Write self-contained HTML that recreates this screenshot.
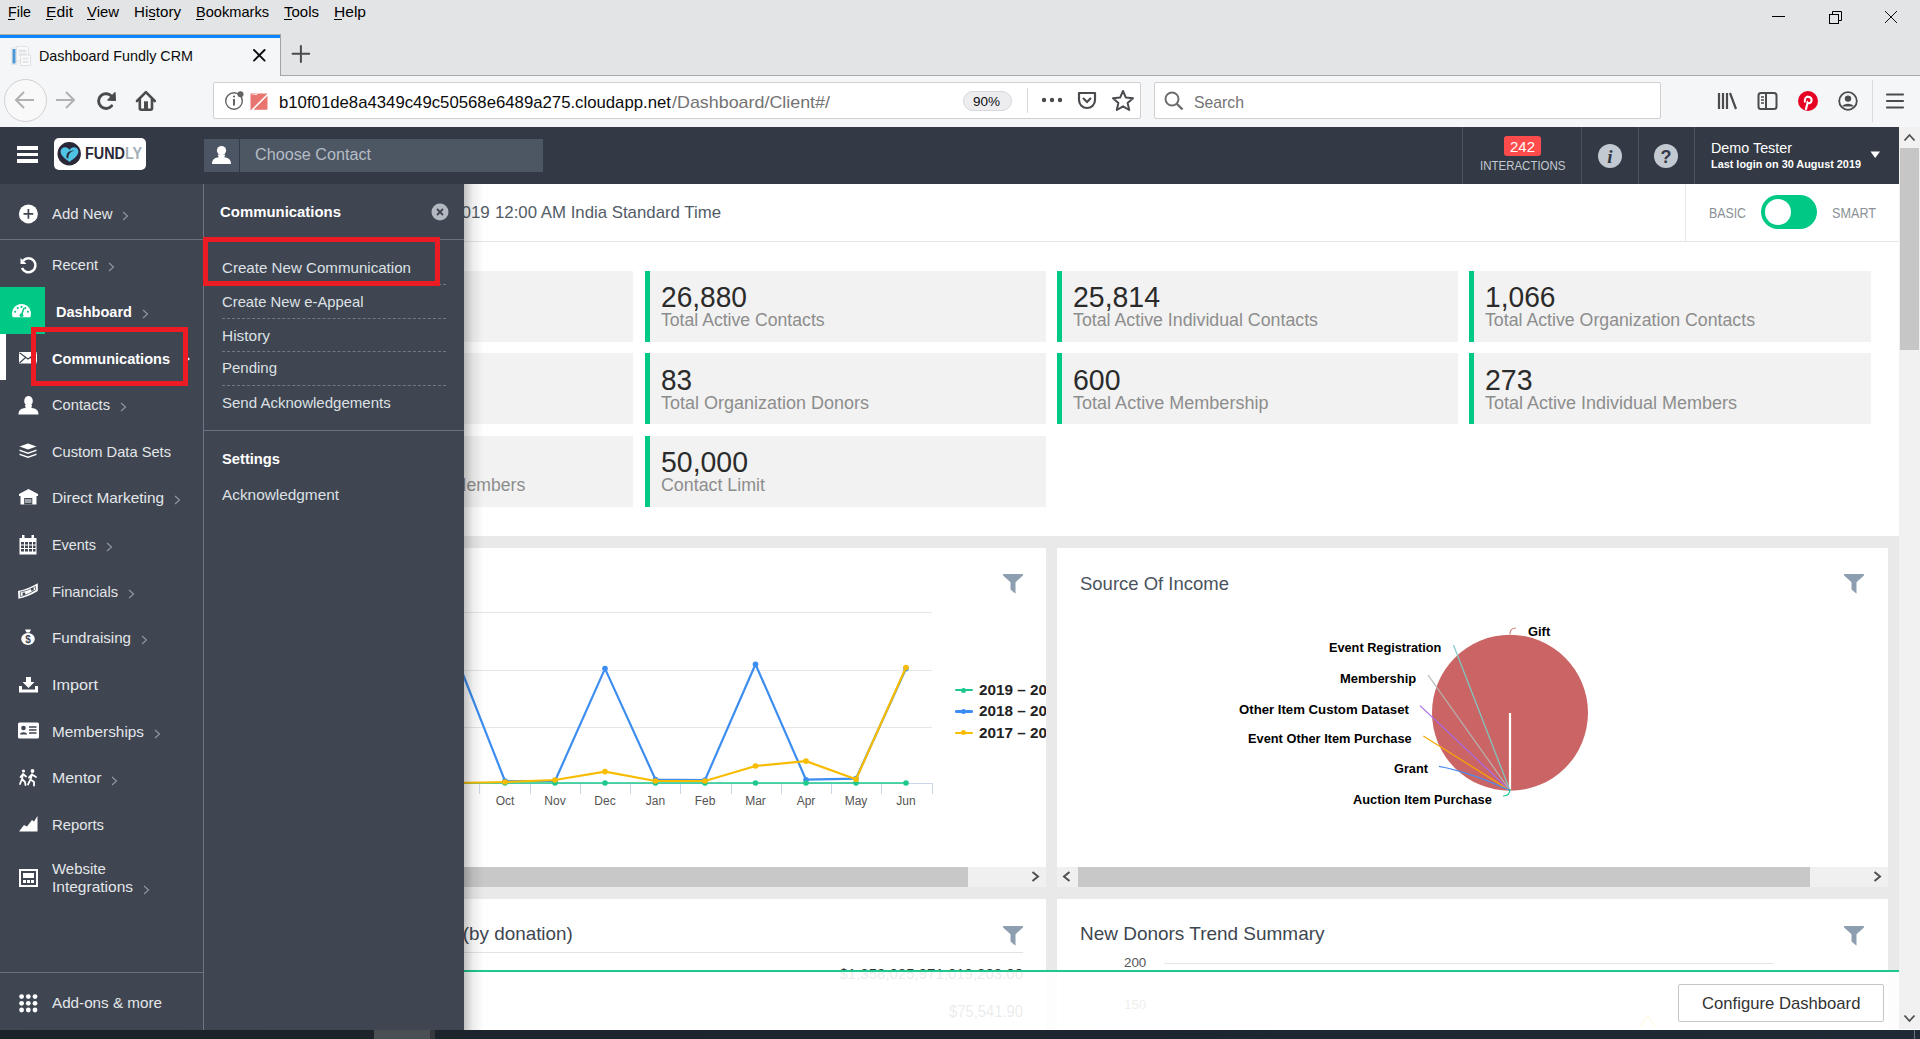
<!DOCTYPE html><html><head><meta charset="utf-8"><style>
html,body{margin:0;padding:0;width:1920px;height:1039px;overflow:hidden;position:relative;background:#fff;font-family:"Liberation Sans",sans-serif}
.t{position:absolute;line-height:1;white-space:nowrap;transform-origin:0 50%}
svg{overflow:visible}
</style></head><body>
<div style="position:absolute;left:0px;top:0px;width:1920px;height:34px;background:#e3e4e6"></div>
<div style="position:absolute;left:0px;top:34px;width:1920px;height:41px;background:#e3e4e6"></div>
<div style="position:absolute;left:280px;top:75px;width:1640px;height:1px;background:#a9a9ac"></div>
<div style="position:absolute;left:0px;top:34px;width:280px;height:42px;background:#f5f6f7"></div>
<div style="position:absolute;left:0px;top:34px;width:281px;height:1px;background:#b5aea8"></div>
<div style="position:absolute;left:0px;top:35px;width:280px;height:3px;background:#0a84ff"></div>
<div style="position:absolute;left:280px;top:34px;width:1px;height:42px;background:#a3a3a6"></div>
<div style="position:absolute;left:0px;top:76px;width:1920px;height:51px;background:#f5f6f7"></div>
<div class="t" style="left:8.0px;top:4.30px;font-size:15.0px;color:#000;transform:scaleX(0.9515);">File</div>
<div class="t" style="left:46.0px;top:4.30px;font-size:15.0px;color:#000;transform:scaleX(1.0446);">Edit</div>
<div class="t" style="left:87.0px;top:4.30px;font-size:15.0px;color:#000;transform:scaleX(0.9925);">View</div>
<div class="t" style="left:134.0px;top:4.30px;font-size:15.0px;color:#000;transform:scaleX(1.0070);">History</div>
<div class="t" style="left:196.0px;top:4.30px;font-size:15.0px;color:#000;transform:scaleX(0.9730);">Bookmarks</div>
<div class="t" style="left:284.0px;top:4.30px;font-size:15.0px;color:#000;transform:scaleX(0.9995);">Tools</div>
<div class="t" style="left:334.0px;top:4.30px;font-size:15.0px;color:#000;transform:scaleX(1.0373);">Help</div>
<div style="position:absolute;left:8px;top:19px;width:7px;height:1px;background:#000"></div>
<div style="position:absolute;left:46px;top:19px;width:7px;height:1px;background:#000"></div>
<div style="position:absolute;left:87px;top:19px;width:8px;height:1px;background:#000"></div>
<div style="position:absolute;left:149px;top:19px;width:6px;height:1px;background:#000"></div>
<div style="position:absolute;left:196px;top:19px;width:8px;height:1px;background:#000"></div>
<div style="position:absolute;left:284px;top:19px;width:8px;height:1px;background:#000"></div>
<div style="position:absolute;left:334px;top:19px;width:8px;height:1px;background:#000"></div>
<div style="position:absolute;left:1772px;top:16px;width:13px;height:1px;background:#000"></div>
<svg style="position:absolute;left:1827px;top:9px" width="18" height="18"><rect x="2.5" y="5.5" width="9" height="9" fill="none" stroke="#000"/><path d="M5.5 5.5V2.5H14.5V11.5H11.5" fill="none" stroke="#000"/></svg>
<svg style="position:absolute;left:1883px;top:9px" width="18" height="18"><path d="M2 2L14 14M14 2L2 14" stroke="#111" stroke-width="1"/></svg>
<svg style="position:absolute;left:0;top:0" width="40" height="70"><rect x="11.5" y="48" width="5" height="16.5" fill="#f3f4f6" stroke="#dadcdf" stroke-width="0.6"/><rect x="12.5" y="49" width="3" height="14.5" fill="#4b97d6"/><path d="M16.5 46.5H26.5L28.5 48.5V61H16.5Z" fill="#fafafa" stroke="#d8d8da" stroke-width="0.7"/><rect x="18.5" y="49.5" width="8" height="3" fill="#e1e4ea"/><rect x="18.5" y="53.5" width="8" height="2" fill="#e1e4ea"/><path d="M20.5 55H30.5V65.5H20.5Z" fill="#fbfbfb" stroke="#d4d4d6" stroke-width="0.7"/><rect x="22.5" y="57.5" width="6" height="2" fill="#e3e6ea"/><rect x="22.5" y="61" width="6" height="2" fill="#e3e6ea"/></svg>
<div class="t" style="left:39.0px;top:48.30px;font-size:15.0px;color:#0c0c0d;transform:scaleX(0.9571);">Dashboard Fundly CRM</div>
<svg style="position:absolute;left:0;top:0" width="330" height="80"><path d="M254 50L264.6 60.6M264.6 50L254 60.6" stroke="#0c0c0d" stroke-width="1.9" stroke-linecap="round"/><path d="M300.9 46V62M292.6 53.8H309.2" stroke="#4a4a4f" stroke-width="2" stroke-linecap="round"/></svg>
<div style="position:absolute;left:4px;top:79px;width:41px;height:41px;border:1px solid #cfd0d2;border-radius:50%;background:#f9f9fa"></div>
<svg style="position:absolute;left:14px;top:90px" width="22" height="20"><path d="M2 10H20M10 2L2 10L10 18" fill="none" stroke="#b1b1b3" stroke-width="2"/></svg>
<svg style="position:absolute;left:55px;top:90px" width="22" height="20"><path d="M1 10H19M11 2L19 10L11 18" fill="none" stroke="#b1b1b3" stroke-width="2"/></svg>
<svg style="position:absolute;left:0;top:0" width="200" height="130"><path d="M112.06 96.86A7.4 7.4 0 1 0 111.67 105.86" fill="none" stroke="#4a4a4f" stroke-width="2.9" stroke-linecap="round"/><path d="M115 92.6L115.4 100.3L107.8 100.1Z" fill="#4a4a4f" stroke="#4a4a4f" stroke-width="1.2" stroke-linejoin="round"/><path d="M137 101L145.9 92.2L154.8 101" fill="none" stroke="#4a4a4f" stroke-width="2.6" stroke-linecap="round" stroke-linejoin="round"/><path d="M139.8 99V108.3Q139.8 109.7 141.2 109.7H150.6Q152 109.7 152 108.3V99" fill="none" stroke="#4a4a4f" stroke-width="2.6"/><rect x="144" y="101.3" width="4" height="8.5" fill="#4a4a4f"/></svg>
<div style="position:absolute;left:213px;top:82px;width:926px;height:35px;background:#fff;border:1px solid #cfcfd1;border-radius:2px"></div>
<svg style="position:absolute;left:224px;top:91px" width="22" height="20"><circle cx="10" cy="10" r="8.3" fill="none" stroke="#636366" stroke-width="1.4"/><rect x="9" y="8" width="2" height="6.5" fill="#636366"/><circle cx="10" cy="5.5" r="1.1" fill="#636366"/><circle cx="16.5" cy="3.3" r="3" fill="#636366"/></svg>
<svg style="position:absolute;left:249px;top:91px" width="20" height="20"><path d="M1.5 4H8V2.5H1.5ZM10 2.5H18.5L1.5 19.5V4Z" fill="#e8756f"/><path d="M18.5 4V17.5C18.5 18.3 18 18.8 17.2 18.8H4.5L18.5 4.7Z" fill="#e8756f"/></svg>
<div class="t" style="left:279.0px;top:93.61px;font-size:17.0px;color:#0c0c0d;transform:scaleX(0.9849);">b10f01de8a4349c49c50568e6489a275.cloudapp.net</div>
<div class="t" style="left:672.0px;top:93.61px;font-size:17.0px;color:#737373;transform:scaleX(1.0515);">/Dashboard/Client#/</div>
<div style="position:absolute;left:963px;top:91px;width:47px;height:18px;border:1px solid #d7d7db;border-radius:10px;background:#ededf0"></div>
<div class="t" style="left:973.0px;top:95.00px;font-size:13.0px;color:#0c0c0d;transform:scaleX(1.0377);">90%</div>
<div style="position:absolute;left:1027px;top:88px;width:1px;height:25px;background:#dadadd"></div>
<svg style="position:absolute;left:1040px;top:94px" width="24" height="12"><circle cx="4" cy="6" r="2.2" fill="#4a4a4f"/><circle cx="12" cy="6" r="2.2" fill="#4a4a4f"/><circle cx="20" cy="6" r="2.2" fill="#4a4a4f"/></svg>
<svg style="position:absolute;left:1076px;top:90px" width="22" height="22"><path d="M3 3H19V10A8 8 0 0 1 3 10Z" fill="none" stroke="#4a4a4f" stroke-width="2.2" stroke-linejoin="round"/><path d="M7 8L11 12L15 8" fill="none" stroke="#4a4a4f" stroke-width="2.2"/></svg>
<svg style="position:absolute;left:1111px;top:89px" width="24" height="24"><path d="M12 2L14.9 8.6L22 9.2L16.6 13.9L18.2 21L12 17.3L5.8 21L7.4 13.9L2 9.2L9.1 8.6Z" fill="none" stroke="#4a4a4f" stroke-width="2" stroke-linejoin="round"/></svg>
<div style="position:absolute;left:1154px;top:82px;width:505px;height:35px;background:#fff;border:1px solid #cfcfd1;border-radius:2px"></div>
<svg style="position:absolute;left:1163px;top:90px" width="22" height="22"><circle cx="9" cy="9" r="6.5" fill="none" stroke="#6d6d6e" stroke-width="2"/><path d="M13.5 13.5L19.5 19.5" stroke="#6d6d6e" stroke-width="2.4"/></svg>
<div class="t" style="left:1194.0px;top:93.61px;font-size:17.0px;color:#737373;transform:scaleX(0.9282);">Search</div>
<svg style="position:absolute;left:1717px;top:90px" width="22" height="22"><path d="M2 3V19M6 3V19M10 3V19M13 3L19 19" stroke="#4a4a4f" stroke-width="2.2"/></svg>
<svg style="position:absolute;left:1757px;top:91px" width="22" height="20"><rect x="1.5" y="2" width="18" height="16" rx="2.5" fill="none" stroke="#4a4a4f" stroke-width="2"/><path d="M9 2V18" stroke="#4a4a4f" stroke-width="2"/><path d="M4 6H7M4 9H7M4 12H7" stroke="#4a4a4f" stroke-width="1.3"/></svg>
<svg style="position:absolute;left:1797px;top:90px" width="22" height="22"><circle cx="11" cy="11" r="10" fill="#e60023"/><path d="M10 7C12.8 6.3 15 8 14.6 10.6C14.2 13.3 11.6 13.8 10.6 12.6L9 19" fill="none" stroke="#fff" stroke-width="2.2" stroke-linecap="round"/><path d="M8 12.5C7 9 9 6.8 11 6.6" fill="none" stroke="#fff" stroke-width="2"/></svg>
<svg style="position:absolute;left:1837px;top:90px" width="22" height="22"><circle cx="11" cy="11" r="8.8" fill="none" stroke="#4a4a4f" stroke-width="1.8"/><circle cx="11" cy="8.6" r="3.2" fill="#4a4a4f"/><path d="M5 16.5C7 12.8 15 12.8 17 16.5" fill="#4a4a4f"/></svg>
<div style="position:absolute;left:1872px;top:80px;width:1px;height:42px;background:#dadadd"></div>
<svg style="position:absolute;left:1885px;top:91px" width="22" height="20"><path d="M2 3.5H18M2 10H18M2 16.5H18" stroke="#4a4a4f" stroke-width="2.2" stroke-linecap="round"/></svg>
<div style="position:absolute;left:204px;top:184px;width:1695px;height:846px;background:#fff"></div>
<div style="position:absolute;left:204px;top:241px;width:1695px;height:1px;background:#e6e6e6"></div>
<div style="position:absolute;left:1685px;top:184px;width:1px;height:57px;background:#e6e6e6"></div>
<div class="t" style="left:452.0px;top:204.21px;font-size:17.0px;color:#525c66;">2019</div>
<div class="t" style="left:494.5px;top:204.21px;font-size:17.0px;color:#525c66;transform:scaleX(0.9882);">12:00 AM India Standard Time</div>
<div class="t" style="left:1709.0px;top:205.73px;font-size:14.5px;color:#8a9197;transform:scaleX(0.8503);">BASIC</div>
<div style="position:absolute;left:1761px;top:195px;width:56px;height:34px;border-radius:17px;background:#00c985"></div>
<div style="position:absolute;left:1765px;top:199px;width:26px;height:26px;border-radius:50%;background:#fff"></div>
<div class="t" style="left:1832.0px;top:205.73px;font-size:14.5px;color:#8a9197;transform:scaleX(0.8714);">SMART</div>
<div style="position:absolute;left:233px;top:271px;width:400px;height:71px;background:#f2f2f2"></div>
<div style="position:absolute;left:233px;top:271px;width:5px;height:71px;background:#00c985"></div>
<div style="position:absolute;left:645px;top:271px;width:401px;height:71px;background:#f2f2f2"></div>
<div style="position:absolute;left:645px;top:271px;width:5px;height:71px;background:#00c985"></div>
<div class="t" style="left:661.0px;top:282.75px;font-size:29.0px;color:#2b2b2b;transform:scaleX(0.9695);">26,880</div>
<div class="t" style="left:661.0px;top:312.29px;font-size:17.5px;color:#8d8d8d;transform:scaleX(1.0071);">Total Active Contacts</div>
<div style="position:absolute;left:1057px;top:271px;width:401px;height:71px;background:#f2f2f2"></div>
<div style="position:absolute;left:1057px;top:271px;width:5px;height:71px;background:#00c985"></div>
<div class="t" style="left:1073.0px;top:282.75px;font-size:29.0px;color:#2b2b2b;transform:scaleX(0.9808);">25,814</div>
<div class="t" style="left:1073.0px;top:312.29px;font-size:17.5px;color:#8d8d8d;transform:scaleX(1.0156);">Total Active Individual Contacts</div>
<div style="position:absolute;left:1469px;top:271px;width:402px;height:71px;background:#f2f2f2"></div>
<div style="position:absolute;left:1469px;top:271px;width:5px;height:71px;background:#00c985"></div>
<div class="t" style="left:1485.0px;top:282.75px;font-size:29.0px;color:#2b2b2b;transform:scaleX(0.9714);">1,066</div>
<div class="t" style="left:1485.0px;top:312.29px;font-size:17.5px;color:#8d8d8d;transform:scaleX(1.0130);">Total Active Organization Contacts</div>
<div style="position:absolute;left:233px;top:353px;width:400px;height:71px;background:#f2f2f2"></div>
<div style="position:absolute;left:233px;top:353px;width:5px;height:71px;background:#00c985"></div>
<div style="position:absolute;left:645px;top:353px;width:401px;height:71px;background:#f2f2f2"></div>
<div style="position:absolute;left:645px;top:353px;width:5px;height:71px;background:#00c985"></div>
<div class="t" style="left:661.0px;top:365.75px;font-size:29.0px;color:#2b2b2b;transform:scaleX(0.9610);">83</div>
<div class="t" style="left:661.0px;top:395.29px;font-size:17.5px;color:#8d8d8d;transform:scaleX(1.0280);">Total Organization Donors</div>
<div style="position:absolute;left:1057px;top:353px;width:401px;height:71px;background:#f2f2f2"></div>
<div style="position:absolute;left:1057px;top:353px;width:5px;height:71px;background:#00c985"></div>
<div class="t" style="left:1073.0px;top:365.75px;font-size:29.0px;color:#2b2b2b;transform:scaleX(0.9817);">600</div>
<div class="t" style="left:1073.0px;top:395.29px;font-size:17.5px;color:#8d8d8d;transform:scaleX(1.0307);">Total Active Membership</div>
<div style="position:absolute;left:1469px;top:353px;width:402px;height:71px;background:#f2f2f2"></div>
<div style="position:absolute;left:1469px;top:353px;width:5px;height:71px;background:#00c985"></div>
<div class="t" style="left:1485.0px;top:365.75px;font-size:29.0px;color:#2b2b2b;transform:scaleX(0.9837);">273</div>
<div class="t" style="left:1485.0px;top:395.29px;font-size:17.5px;color:#8d8d8d;transform:scaleX(1.0281);">Total Active Individual Members</div>
<div style="position:absolute;left:233px;top:436px;width:400px;height:71px;background:#f2f2f2"></div>
<div style="position:absolute;left:233px;top:436px;width:5px;height:71px;background:#00c985"></div>
<div class="t" style="left:252.7px;top:477.29px;font-size:17.5px;color:#8d8d8d;transform:scaleX(1.0070);">Total Active Organization Members</div>
<div style="position:absolute;left:645px;top:436px;width:401px;height:71px;background:#f2f2f2"></div>
<div style="position:absolute;left:645px;top:436px;width:5px;height:71px;background:#00c985"></div>
<div class="t" style="left:661.0px;top:447.75px;font-size:29.0px;color:#2b2b2b;transform:scaleX(0.9808);">50,000</div>
<div class="t" style="left:661.0px;top:477.29px;font-size:17.5px;color:#8d8d8d;transform:scaleX(1.0184);">Contact Limit</div>
<div style="position:absolute;left:204px;top:536px;width:1695px;height:494px;background:#e9e9e9"></div>
<div style="position:absolute;left:204px;top:548px;width:842px;height:339px;background:#fff"></div>
<div style="position:absolute;left:1057px;top:548px;width:831px;height:339px;background:#fff"></div>
<div style="position:absolute;left:204px;top:899px;width:842px;height:131px;background:#fff"></div>
<div style="position:absolute;left:1057px;top:899px;width:831px;height:131px;background:#fff"></div>
<svg style="position:absolute;left:1003px;top:573px" width="21" height="21"><path d="M0.1 1.1H19.9V2.4L12.5 9.3V20.8L7.5 16.6V9.3L0.1 2.4Z" fill="#8d9eb1"/></svg>
<svg style="position:absolute;left:1844px;top:573px" width="21" height="21"><path d="M0.1 1.1H19.9V2.4L12.5 9.3V20.8L7.5 16.6V9.3L0.1 2.4Z" fill="#8d9eb1"/></svg>
<svg style="position:absolute;left:1003px;top:925px" width="21" height="21"><path d="M0.1 1.1H19.9V2.4L12.5 9.3V20.8L7.5 16.6V9.3L0.1 2.4Z" fill="#8d9eb1"/></svg>
<svg style="position:absolute;left:1844px;top:925px" width="21" height="21"><path d="M0.1 1.1H19.9V2.4L12.5 9.3V20.8L7.5 16.6V9.3L0.1 2.4Z" fill="#8d9eb1"/></svg>
<div style="position:absolute;left:300px;top:612px;width:632px;height:1px;background:#e6e6e6"></div>
<div style="position:absolute;left:300px;top:670px;width:632px;height:1px;background:#e6e6e6"></div>
<div style="position:absolute;left:300px;top:727px;width:632px;height:1px;background:#e6e6e6"></div>
<div style="position:absolute;left:300px;top:783px;width:632px;height:1px;background:#ccd6eb"></div>
<div style="position:absolute;left:479px;top:783px;width:1px;height:11px;background:#ccd6eb"></div>
<div style="position:absolute;left:529.5px;top:783px;width:1px;height:11px;background:#ccd6eb"></div>
<div style="position:absolute;left:580px;top:783px;width:1px;height:11px;background:#ccd6eb"></div>
<div style="position:absolute;left:630px;top:783px;width:1px;height:11px;background:#ccd6eb"></div>
<div style="position:absolute;left:680px;top:783px;width:1px;height:11px;background:#ccd6eb"></div>
<div style="position:absolute;left:731px;top:783px;width:1px;height:11px;background:#ccd6eb"></div>
<div style="position:absolute;left:781px;top:783px;width:1px;height:11px;background:#ccd6eb"></div>
<div style="position:absolute;left:831px;top:783px;width:1px;height:11px;background:#ccd6eb"></div>
<div style="position:absolute;left:881px;top:783px;width:1px;height:11px;background:#ccd6eb"></div>
<div style="position:absolute;left:932px;top:783px;width:1px;height:11px;background:#ccd6eb"></div>
<div class="t" style="left:495.7px;top:794.84px;font-size:12.0px;color:#555555;">Oct</div>
<div class="t" style="left:544.3px;top:794.84px;font-size:12.0px;color:#555555;">Nov</div>
<div class="t" style="left:594.3px;top:794.84px;font-size:12.0px;color:#555555;">Dec</div>
<div class="t" style="left:645.8px;top:794.84px;font-size:12.0px;color:#555555;">Jan</div>
<div class="t" style="left:694.7px;top:794.84px;font-size:12.0px;color:#555555;">Feb</div>
<div class="t" style="left:745.2px;top:794.84px;font-size:12.0px;color:#555555;">Mar</div>
<div class="t" style="left:796.7px;top:794.84px;font-size:12.0px;color:#555555;">Apr</div>
<div class="t" style="left:844.7px;top:794.84px;font-size:12.0px;color:#555555;">May</div>
<div class="t" style="left:896.3px;top:794.84px;font-size:12.0px;color:#555555;">Jun</div>
<svg style="position:absolute;left:0;top:0" width="1920" height="1039"><polyline points="455.0,654.0 505.0,781.0 555.0,781.0 605.0,668.6 655.5,779.5 705.0,780.0 755.5,664.2 806.0,779.7 856.0,778.6 906.0,668.6" fill="none" stroke="#3d8ef0" stroke-width="2.2" stroke-linejoin="round"/><circle cx="505.0" cy="781.0" r="2.8" fill="#3d8ef0"/><circle cx="555.0" cy="781.0" r="2.8" fill="#3d8ef0"/><circle cx="605.0" cy="668.6" r="2.8" fill="#3d8ef0"/><circle cx="655.5" cy="779.5" r="2.8" fill="#3d8ef0"/><circle cx="705.0" cy="780.0" r="2.8" fill="#3d8ef0"/><circle cx="755.5" cy="664.2" r="2.8" fill="#3d8ef0"/><circle cx="806.0" cy="779.7" r="2.8" fill="#3d8ef0"/><circle cx="856.0" cy="778.6" r="2.8" fill="#3d8ef0"/><circle cx="906.0" cy="668.6" r="2.8" fill="#3d8ef0"/><polyline points="455.0,783.0 505.0,783.0 555.0,783.0 605.0,783.0 655.5,783.0 705.0,783.0 755.5,783.0 806.0,783.0 856.0,783.0 906.0,783.0" fill="none" stroke="#1dc98d" stroke-width="1.6" stroke-linejoin="round"/><circle cx="505.0" cy="783.0" r="2.8" fill="#1dc98d"/><circle cx="555.0" cy="783.0" r="2.8" fill="#1dc98d"/><circle cx="605.0" cy="783.0" r="2.8" fill="#1dc98d"/><circle cx="655.5" cy="783.0" r="2.8" fill="#1dc98d"/><circle cx="705.0" cy="783.0" r="2.8" fill="#1dc98d"/><circle cx="755.5" cy="783.0" r="2.8" fill="#1dc98d"/><circle cx="806.0" cy="783.0" r="2.8" fill="#1dc98d"/><circle cx="856.0" cy="783.0" r="2.8" fill="#1dc98d"/><circle cx="906.0" cy="783.0" r="2.8" fill="#1dc98d"/><polyline points="455.0,783.0 505.0,782.0 555.0,780.0 605.0,771.6 655.5,781.0 705.0,781.0 755.5,766.0 806.0,761.1 856.0,779.3 906.0,667.5" fill="none" stroke="#f7bc00" stroke-width="2.2" stroke-linejoin="round"/><circle cx="505.0" cy="782.0" r="2.8" fill="#f7bc00"/><circle cx="555.0" cy="780.0" r="2.8" fill="#f7bc00"/><circle cx="605.0" cy="771.6" r="2.8" fill="#f7bc00"/><circle cx="655.5" cy="781.0" r="2.8" fill="#f7bc00"/><circle cx="705.0" cy="781.0" r="2.8" fill="#f7bc00"/><circle cx="755.5" cy="766.0" r="2.8" fill="#f7bc00"/><circle cx="806.0" cy="761.1" r="2.8" fill="#f7bc00"/><circle cx="856.0" cy="779.3" r="2.8" fill="#f7bc00"/><circle cx="906.0" cy="667.5" r="2.8" fill="#f7bc00"/></svg>
<div style="position:absolute;left:954.5px;top:688.7px;width:18.5px;height:2.6px;background:#1dc98d;border-radius:1.3px"></div>
<div style="position:absolute;left:961px;top:687.5px;width:5px;height:5px;border-radius:50%;background:#1dc98d"></div>
<div class="t" style="left:979.0px;top:683.15px;font-size:14.0px;color:#222;font-weight:bold;transform:scaleX(1.0918);">2019 – 20</div>
<div style="position:absolute;left:954.5px;top:710.0px;width:18.5px;height:2.6px;background:#3d8ef0;border-radius:1.3px"></div>
<div style="position:absolute;left:961px;top:708.8px;width:5px;height:5px;border-radius:50%;background:#3d8ef0"></div>
<div class="t" style="left:979.0px;top:704.45px;font-size:14.0px;color:#222;font-weight:bold;transform:scaleX(1.0918);">2018 – 20</div>
<div style="position:absolute;left:954.5px;top:731.5px;width:18.5px;height:2.6px;background:#f7bc00;border-radius:1.3px"></div>
<div style="position:absolute;left:961px;top:730.3px;width:5px;height:5px;border-radius:50%;background:#f7bc00"></div>
<div class="t" style="left:979.0px;top:725.95px;font-size:14.0px;color:#222;font-weight:bold;transform:scaleX(1.0918);">2017 – 20</div>
<div style="position:absolute;left:1046px;top:660px;width:11px;height:100px;background:#e9e9e9"></div>
<div style="position:absolute;left:204px;top:867px;width:842px;height:20px;background:#f0f0f0"></div>
<div style="position:absolute;left:204px;top:867px;width:764px;height:20px;background:#c8c8c8"></div>
<svg style="position:absolute;left:1031px;top:871px" width="9" height="11"><path d="M1.5 1L7 5.5L1.5 10" fill="none" stroke="#505050" stroke-width="2"/></svg>
<div class="t" style="left:1080.0px;top:573.92px;font-size:19.0px;color:#4a535d;transform:scaleX(0.9731);">Source Of Income</div>
<svg style="position:absolute;left:0;top:0" width="1920" height="1039"><circle cx="1510" cy="712.8" r="78" fill="#cb6565"/><path d="M1510 713V790.5" stroke="#fff" stroke-width="2.2"/><path d="M1510 790.5L1453.5 645" stroke="#7ccbc4" stroke-width="1.2" fill="none"/><path d="M1510 790.5L1428 675" stroke="#b5b5b5" stroke-width="1.2" fill="none"/><path d="M1510 790.5L1420 705.6" stroke="#a86be8" stroke-width="1.2" fill="none"/><path d="M1510 790.5L1423.3 736" stroke="#f7a800" stroke-width="1.2" fill="none"/><path d="M1510 790.5Q1470 772 1439 766.3" stroke="#4a8ef0" stroke-width="1.2" fill="none"/><path d="M1510 789Q1510 796 1503 796" stroke="#23c48a" stroke-width="1.2" fill="none"/><path d="M1510 634Q1510 628 1516 628" stroke="#d87a7a" stroke-width="1.2" fill="none"/></svg>
<div class="t" style="left:1527.7px;top:625.54px;font-size:12.0px;color:#000;font-weight:bold;transform:scaleX(1.0745);">Gift</div>
<div class="t" style="left:1328.7px;top:642.44px;font-size:12.0px;color:#000;font-weight:bold;transform:scaleX(1.0592);">Event Registration</div>
<div class="t" style="left:1339.8px;top:672.54px;font-size:12.0px;color:#000;font-weight:bold;transform:scaleX(1.0781);">Membership</div>
<div class="t" style="left:1239.3px;top:703.74px;font-size:12.0px;color:#000;font-weight:bold;transform:scaleX(1.0982);">Other Item Custom Dataset</div>
<div class="t" style="left:1248.3px;top:732.64px;font-size:12.0px;color:#000;font-weight:bold;transform:scaleX(1.0672);">Event Other Item Purchase</div>
<div class="t" style="left:1394.2px;top:763.44px;font-size:12.0px;color:#000;font-weight:bold;transform:scaleX(1.0592);">Grant</div>
<div class="t" style="left:1353.3px;top:794.34px;font-size:12.0px;color:#000;font-weight:bold;transform:scaleX(1.0674);">Auction Item Purchase</div>
<div style="position:absolute;left:1057px;top:867px;width:831px;height:20px;background:#f0f0f0"></div>
<div style="position:absolute;left:1078px;top:867px;width:732px;height:20px;background:#c8c8c8"></div>
<svg style="position:absolute;left:1062px;top:871px" width="9" height="11"><path d="M7.5 1L2 5.5L7.5 10" fill="none" stroke="#505050" stroke-width="2"/></svg>
<svg style="position:absolute;left:1873px;top:871px" width="9" height="11"><path d="M1.5 1L7 5.5L1.5 10" fill="none" stroke="#505050" stroke-width="2"/></svg>
<div class="t" style="left:335.2px;top:923.92px;font-size:19.0px;color:#3e4650;transform:scaleX(0.9918);">Top 10 Donors (by donation)</div>
<div style="position:absolute;left:300px;top:952px;width:723px;height:1px;background:#e3e3e3"></div>
<div class="t" style="left:1080.0px;top:923.72px;font-size:19.0px;color:#3e4650;transform:scaleX(0.9981);">New Donors Trend Summary</div>
<div class="t" style="left:1123.8px;top:957.34px;font-size:12.0px;color:#555;transform:scaleX(1.1138);">200</div>
<div style="position:absolute;left:1164px;top:963px;width:610px;height:1px;background:#e6e6e6"></div>
<div class="t" style="right:897px;top:965.6px;font-size:15px;color:#333">$1,358,025,971,019,203.00</div>
<div style="position:absolute;left:300px;top:992px;width:723px;height:1px;background:#e6e6e6"></div>
<div class="t" style="left:949.0px;top:1003.31px;font-size:17.0px;color:#333;transform:scaleX(0.8697);">$75,541.90</div>
<div class="t" style="left:1123.8px;top:999.24px;font-size:12.0px;color:#555;transform:scaleX(1.1138);">150</div>
<div style="position:absolute;left:1164px;top:1007px;width:610px;height:1px;background:#e6e6e6"></div>
<svg style="position:absolute;left:1638px;top:1010px" width="20" height="20"><path d="M2 16L9.5 6L17 16" fill="none" stroke="#f7bc00" stroke-width="1.5"/></svg>
<div style="position:absolute;left:204px;top:972px;width:1695px;height:58px;background:rgba(255,255,255,0.9)"></div>
<div style="position:absolute;left:204px;top:970px;width:1716px;height:2px;background:#1dc98d"></div>
<div style="position:absolute;left:1678px;top:984px;width:204px;height:36px;border:1px solid #c6c6c6;border-radius:2px;background:#fff"></div>
<div class="t" style="left:1702.0px;top:994.81px;font-size:17.0px;color:#333;transform:scaleX(0.9802);">Configure Dashboard</div>
<div style="position:absolute;left:0px;top:127px;width:1899px;height:57px;background:#343a45"></div>
<div style="position:absolute;left:17px;top:146px;width:21px;height:3.5px;background:#fff"></div>
<div style="position:absolute;left:17px;top:152.5px;width:21px;height:3.5px;background:#fff"></div>
<div style="position:absolute;left:17px;top:159px;width:21px;height:3.5px;background:#fff"></div>
<div style="position:absolute;left:54px;top:138px;width:92px;height:32px;border-radius:5px;background:#fff"></div>
<svg style="position:absolute;left:57px;top:142px" width="24" height="24"><circle cx="12.2" cy="11.75" r="11.7" fill="#2a2838"/><path d="M12.5 19.9C8 16.7 3.6 13.6 3.6 9.6C3.6 7 5.7 5.3 8 5.3C10 5.3 11.8 6.6 12.5 7.9C13.2 6.6 15 5.3 17 5.3C19.4 5.3 21.4 7 21.4 9.6C21.4 13.6 17 16.7 12.5 19.9Z" fill="#4fc3e3"/><path d="M9.8 16.2C8.6 12 11.2 8.2 17.8 8.6C13.2 9.6 11.4 12.2 11.4 16.2Z" fill="#2a2838"/></svg>
<div class="t" style="left:84.6px;top:145.66px;font-size:16px;font-weight:bold;color:#2a2838;transform:scaleX(0.9004)">FUND<span style="color:#a3b0b6">LY</span></div>
<div style="position:absolute;left:204px;top:139px;width:35px;height:33px;background:#4b5563"></div>
<div style="position:absolute;left:240px;top:139px;width:303px;height:33px;background:#4d5764"></div>
<svg style="position:absolute;left:211px;top:145px" width="21" height="20"><circle cx="10.5" cy="5.5" r="4.6" fill="#fff"/><path d="M6.8 9.5C7 11 7.5 11.6 8 12C4 13 1 14 1 19H20C20 14 17 13 13 12C13.5 11.6 14 11 14.2 9.5Z" fill="#fff"/></svg>
<div class="t" style="left:255.0px;top:147.46px;font-size:16.0px;color:#b5bcc4;transform:scaleX(1.0110);">Choose Contact</div>
<div style="position:absolute;left:1462px;top:127px;width:1px;height:57px;background:#4a5260"></div>
<div style="position:absolute;left:1581px;top:127px;width:1px;height:57px;background:#4a5260"></div>
<div style="position:absolute;left:1638px;top:127px;width:1px;height:57px;background:#4a5260"></div>
<div style="position:absolute;left:1694px;top:127px;width:1px;height:57px;background:#4a5260"></div>
<div style="position:absolute;left:1504px;top:136px;width:37px;height:20px;border-radius:3px;background:#ff4b4b"></div>
<div class="t" style="left:1509.6px;top:139.00px;font-size:15.0px;color:#fff;transform:scaleX(0.9989);">242</div>
<div class="t" style="left:1479.7px;top:160.32px;font-size:12.5px;color:#c3cad2;transform:scaleX(0.9187);">INTERACTIONS</div>
<svg style="position:absolute;left:1598px;top:143.5px" width="24" height="24"><circle cx="12" cy="12" r="12" fill="#c3c9d1"/><text x="12" y="18.5" text-anchor="middle" font-family="Liberation Serif" font-style="italic" font-weight="bold" font-size="19" fill="#343a45">i</text></svg>
<svg style="position:absolute;left:1654px;top:143.5px" width="24" height="24"><circle cx="12" cy="12" r="12" fill="#c3c9d1"/><text x="12" y="18.5" text-anchor="middle" font-family="Liberation Sans" font-weight="bold" font-size="18" fill="#343a45">?</text></svg>
<div class="t" style="left:1711.0px;top:141.03px;font-size:14.5px;color:#fff;transform:scaleX(0.9886);">Demo Tester</div>
<div class="t" style="left:1711.0px;top:159.39px;font-size:11.0px;color:#fff;font-weight:bold;transform:scaleX(0.9882);">Last login on 30 August 2019</div>
<svg style="position:absolute;left:1870px;top:151px" width="11" height="8"><path d="M0.5 0.5H10L5.2 7Z" fill="#fff"/></svg>
<div style="position:absolute;left:0px;top:184px;width:203px;height:846px;background:#3f4551"></div>
<div style="position:absolute;left:203px;top:184px;width:1px;height:846px;background:#6a7684"></div>
<div style="position:absolute;left:0px;top:239px;width:203px;height:1px;background:#68737f"></div>
<div style="position:absolute;left:0px;top:972px;width:203px;height:1px;background:#68737f"></div>
<div style="position:absolute;left:0px;top:287px;width:45px;height:47px;background:#00c985"></div>
<div style="position:absolute;left:0px;top:334px;width:6px;height:46px;background:#fff"></div>
<div class="t" style="left:52.0px;top:205.70px;font-size:15.0px;color:#e4e7ea;transform:scaleX(0.9956);">Add New</div>
<svg style="position:absolute;left:122.1px;top:211.1px" width="7" height="10"><path d="M1 1L5.5 5L1 9" fill="none" stroke="#8f969e" stroke-width="1.2"/></svg>
<div class="t" style="left:52.0px;top:256.80px;font-size:15.0px;color:#e4e7ea;transform:scaleX(0.9679);">Recent</div>
<svg style="position:absolute;left:107.5px;top:262.2px" width="7" height="10"><path d="M1 1L5.5 5L1 9" fill="none" stroke="#8f969e" stroke-width="1.2"/></svg>
<div class="t" style="left:56.0px;top:303.60px;font-size:15.0px;color:#fff;font-weight:bold;transform:scaleX(0.9700);">Dashboard</div>
<svg style="position:absolute;left:141.5px;top:309.0px" width="7" height="10"><path d="M1 1L5.5 5L1 9" fill="none" stroke="#8f969e" stroke-width="1.2"/></svg>
<div class="t" style="left:52.0px;top:350.70px;font-size:15.0px;color:#fff;font-weight:bold;transform:scaleX(0.9698);">Communications</div>
<div class="t" style="left:52.0px;top:396.90px;font-size:15.0px;color:#e4e7ea;transform:scaleX(0.9798);">Contacts</div>
<svg style="position:absolute;left:119.5px;top:402.3px" width="7" height="10"><path d="M1 1L5.5 5L1 9" fill="none" stroke="#8f969e" stroke-width="1.2"/></svg>
<div class="t" style="left:52.0px;top:444.00px;font-size:15.0px;color:#e4e7ea;transform:scaleX(0.9777);">Custom Data Sets</div>
<div class="t" style="left:52.0px;top:489.60px;font-size:15.0px;color:#e4e7ea;transform:scaleX(1.0256);">Direct Marketing</div>
<svg style="position:absolute;left:173.5px;top:495.0px" width="7" height="10"><path d="M1 1L5.5 5L1 9" fill="none" stroke="#8f969e" stroke-width="1.2"/></svg>
<div class="t" style="left:52.0px;top:536.70px;font-size:15.0px;color:#e4e7ea;transform:scaleX(0.9595);">Events</div>
<svg style="position:absolute;left:105.5px;top:542.1px" width="7" height="10"><path d="M1 1L5.5 5L1 9" fill="none" stroke="#8f969e" stroke-width="1.2"/></svg>
<div class="t" style="left:52.0px;top:583.80px;font-size:15.0px;color:#e4e7ea;transform:scaleX(0.9773);">Financials</div>
<svg style="position:absolute;left:127.5px;top:589.2px" width="7" height="10"><path d="M1 1L5.5 5L1 9" fill="none" stroke="#8f969e" stroke-width="1.2"/></svg>
<div class="t" style="left:52.0px;top:630.00px;font-size:15.0px;color:#e4e7ea;transform:scaleX(1.0079);">Fundraising</div>
<svg style="position:absolute;left:140.5px;top:635.4px" width="7" height="10"><path d="M1 1L5.5 5L1 9" fill="none" stroke="#8f969e" stroke-width="1.2"/></svg>
<div class="t" style="left:52.0px;top:676.80px;font-size:15.0px;color:#e4e7ea;transform:scaleX(1.0821);">Import</div>
<div class="t" style="left:52.0px;top:723.60px;font-size:15.0px;color:#e4e7ea;transform:scaleX(1.0218);">Memberships</div>
<svg style="position:absolute;left:153.5px;top:729.0px" width="7" height="10"><path d="M1 1L5.5 5L1 9" fill="none" stroke="#8f969e" stroke-width="1.2"/></svg>
<div class="t" style="left:52.0px;top:770.10px;font-size:15.0px;color:#e4e7ea;transform:scaleX(1.0603);">Mentor</div>
<svg style="position:absolute;left:111.0px;top:775.5px" width="7" height="10"><path d="M1 1L5.5 5L1 9" fill="none" stroke="#8f969e" stroke-width="1.2"/></svg>
<div class="t" style="left:52.0px;top:817.10px;font-size:15.0px;color:#e4e7ea;transform:scaleX(0.9900);">Reports</div>
<div class="t" style="left:52.0px;top:860.50px;font-size:15.0px;color:#e4e7ea;transform:scaleX(0.9960);">Website</div>
<div class="t" style="left:52.0px;top:879.10px;font-size:15.0px;color:#e4e7ea;transform:scaleX(1.0334);">Integrations</div>
<svg style="position:absolute;left:142.5px;top:884.5px" width="7" height="10"><path d="M1 1L5.5 5L1 9" fill="none" stroke="#8f969e" stroke-width="1.2"/></svg>
<div class="t" style="left:52.0px;top:995.30px;font-size:15.0px;color:#e4e7ea;transform:scaleX(1.0149);">Add-ons &amp; more</div>
<svg style="position:absolute;left:185px;top:355px" width="6" height="8"><path d="M0 0L5 4L0 8Z" fill="#fff"/></svg>
<svg style="position:absolute;left:18px;top:204px" width="20" height="20"><circle cx="10.4" cy="9.9" r="9.5" fill="#fff"/><path d="M10.4 5V14.8M5.5 9.9H15.3" stroke="#3f4551" stroke-width="1.7"/></svg>
<svg style="position:absolute;left:19px;top:257px" width="18" height="16"><path d="M4.2 3.6A7 7 0 1 1 3 11" fill="none" stroke="#fff" stroke-width="2.6"/><path d="M1.5 1V7H7.5Z" fill="#fff"/></svg>
<svg style="position:absolute;left:0;top:0" width="50" height="330"><path d="M12.7 317.2A9.5 9.5 0 1 1 30.3 317.2Z" fill="#fff"/><circle cx="15.12" cy="311.79" r="1.05" fill="#00c985"/><circle cx="17.71" cy="308.09" r="1.05" fill="#00c985"/><circle cx="21.50" cy="306.90" r="1.05" fill="#00c985"/><circle cx="25.29" cy="308.09" r="1.05" fill="#00c985"/><circle cx="27.88" cy="311.79" r="1.05" fill="#00c985"/><path d="M21.5 315L24 308" stroke="#00c985" stroke-width="1.5"/><circle cx="21.5" cy="315.2" r="1.9" fill="#00c985"/></svg>
<svg style="position:absolute;left:19px;top:352px" width="18" height="12"><rect x="0" y="0" width="18" height="11.5" fill="#fff"/><path d="M0.5 0.8L9 7L17.5 0.8M0.5 11L6.5 5.5M17.5 11L11.5 5.5" fill="none" stroke="#3f4551" stroke-width="1.1"/></svg>
<svg style="position:absolute;left:18px;top:396px" width="21" height="19"><ellipse cx="10.5" cy="5" rx="4.3" ry="5" fill="#fff"/><path d="M7 9C7.3 11 7.5 11.5 7.8 11.8C3 12.8 0.5 14 0.5 18.5H20.5C20.5 14 18 12.8 13.2 11.8C13.5 11.5 13.7 11 14 9Z" fill="#fff"/></svg>
<svg style="position:absolute;left:19px;top:443px" width="18" height="15"><path d="M9 0.5L17.5 3.5L9 6.5L0.5 3.5Z" fill="#fff"/><path d="M0.5 6.5L9 9.5L17.5 6.5V8L9 11L0.5 8Z" fill="#fff"/><path d="M0.5 10.5L9 13.5L17.5 10.5V12L9 15L0.5 12Z" fill="#fff"/></svg>
<svg style="position:absolute;left:19px;top:489px" width="19" height="16"><path d="M9.5 0L19 5V7H0V5Z" fill="#fff"/><rect x="1.5" y="7" width="16" height="8.5" fill="#fff"/><rect x="5.2" y="9" width="8.1" height="6.5" fill="#3f4551"/><path d="M6 11H12.5M6 13H12.5" stroke="#fff" stroke-width="1"/></svg>
<svg style="position:absolute;left:19px;top:535px" width="19" height="20"><rect x="0.5" y="3" width="17" height="16.5" fill="#fff"/><rect x="3" y="0" width="2.5" height="5" fill="#fff"/><rect x="12.5" y="0" width="2.5" height="5" fill="#fff"/><g fill="#3f4551"><rect x="2" y="7" width="3" height="2.5"/><rect x="6" y="7" width="3" height="2.5"/><rect x="10" y="7" width="3" height="2.5"/><rect x="14" y="7" width="2.5" height="2.5"/><rect x="2" y="10.5" width="3" height="2.5"/><rect x="6" y="10.5" width="3" height="2.5"/><rect x="10" y="10.5" width="3" height="2.5"/><rect x="14" y="10.5" width="2.5" height="2.5"/><rect x="2" y="14" width="3" height="2.5"/><rect x="6" y="14" width="3" height="2.5"/><rect x="10" y="14" width="3" height="2.5"/><rect x="14" y="14" width="2.5" height="2.5"/></g></svg>
<svg style="position:absolute;left:0;top:0" width="50" height="620"><path d="M18 591Q27 589.5 37.8 583.2L37.8 591Q29 596.5 18.4 598.8Z" fill="#fff"/><path d="M20.2 592.2Q27.5 591 35.6 586.5L35.6 589.9Q28.5 594.2 20.5 596.7Z" fill="none" stroke="#3f4551" stroke-width="0.7"/><rect x="22.6" y="592.6" width="2.6" height="2.6" fill="#3f4551"/><rect x="31" y="588" width="2.6" height="2.6" fill="#3f4551"/></svg>
<svg style="position:absolute;left:21px;top:629px" width="14" height="16"><path d="M4 0.5H10L8.5 3.5H5.5Z" fill="#fff"/><ellipse cx="7" cy="10" rx="6.8" ry="6" fill="#fff"/><text x="7" y="14" text-anchor="middle" font-family="Liberation Sans" font-weight="bold" font-size="10" fill="#3f4551">$</text></svg>
<svg style="position:absolute;left:19px;top:677px" width="19" height="16"><path d="M7 0H12V5H15.5L9.5 11L3.5 5H7Z" fill="#fff"/><path d="M0 9H3V12.5H16V9H19V15.5H0Z" fill="#fff"/></svg>
<svg style="position:absolute;left:18px;top:722px" width="21" height="17"><rect x="0" y="0.5" width="21" height="16" rx="1.5" fill="#fff"/><circle cx="5.5" cy="6" r="2.3" fill="#3f4551"/><path d="M2 12.5C2 9.5 9 9.5 9 12.5Z" fill="#3f4551"/><path d="M11 5H18.5M11 8H18.5M11 11H18.5" stroke="#3f4551" stroke-width="1.5"/></svg>
<svg style="position:absolute;left:19px;top:769px" width="20" height="17"><g fill="none" stroke="#fff" stroke-width="1.8" stroke-linecap="round"><circle cx="4.5" cy="2" r="1.6" fill="#fff" stroke="none"/><path d="M4 5L3 10L1 15M3 10L6 13L6.5 16M4 5L1.5 8M4 5L7 7.5"/><circle cx="13.5" cy="2" r="1.9" fill="#fff" stroke="none"/><path d="M13 5.5L11.5 10.5L9 15.5M11.5 10.5L15 13L15 16.5M13 5.5L10 8.5M13 5.5L17 8"/></g></svg>
<svg style="position:absolute;left:19px;top:816px" width="19" height="16"><path d="M0 15.5L5 9L8 10.5L13 4L15 5.5L18.5 0V15.5Z" fill="#fff"/></svg>
<svg style="position:absolute;left:19px;top:869px" width="19" height="18"><rect x="1" y="1" width="17" height="16" fill="none" stroke="#fff" stroke-width="2"/><rect x="4" y="4" width="11" height="5" fill="#fff"/><rect x="4" y="11" width="3" height="3" fill="#fff"/><rect x="8" y="11" width="3" height="3" fill="#fff"/><rect x="12" y="11" width="3" height="3" fill="#fff"/></svg>
<svg style="position:absolute;left:19px;top:994px" width="19" height="19"><circle cx="2.6" cy="2.6" r="2.4" fill="#fff"/><circle cx="2.6" cy="9.3" r="2.4" fill="#fff"/><circle cx="2.6" cy="16.0" r="2.4" fill="#fff"/><circle cx="9.3" cy="2.6" r="2.4" fill="#fff"/><circle cx="9.3" cy="9.3" r="2.4" fill="#fff"/><circle cx="9.3" cy="16.0" r="2.4" fill="#fff"/><circle cx="16.0" cy="2.6" r="2.4" fill="#fff"/><circle cx="16.0" cy="9.3" r="2.4" fill="#fff"/><circle cx="16.0" cy="16.0" r="2.4" fill="#fff"/></svg>
<div style="position:absolute;left:464px;top:184px;width:20px;height:846px;background:linear-gradient(to right,rgba(0,0,0,0.24),rgba(0,0,0,0.07) 45%,rgba(0,0,0,0))"></div>
<div style="position:absolute;left:204px;top:184px;width:260px;height:846px;background:#3f4551"></div>
<div style="position:absolute;left:204px;top:239px;width:260px;height:1px;background:#68737f"></div>
<div style="position:absolute;left:204px;top:430px;width:260px;height:1px;background:#68737f"></div>
<div class="t" style="left:220.3px;top:203.90px;font-size:15.0px;color:#fff;font-weight:bold;transform:scaleX(0.9944);">Communications</div>
<svg style="position:absolute;left:431px;top:203px" width="18" height="18"><circle cx="9" cy="9" r="8.5" fill="#b3b9c1"/><path d="M6 6L12 12M12 6L6 12" stroke="#3f4551" stroke-width="1.8"/></svg>
<div class="t" style="left:222.0px;top:260.93px;font-size:14.5px;color:#dde1e5;transform:scaleX(1.0423);">Create New Communication</div>
<div class="t" style="left:222.0px;top:294.73px;font-size:14.5px;color:#dde1e5;transform:scaleX(1.0214);">Create New e-Appeal</div>
<div class="t" style="left:222.0px;top:328.73px;font-size:14.5px;color:#dde1e5;transform:scaleX(1.0639);">History</div>
<div class="t" style="left:222.0px;top:361.33px;font-size:14.5px;color:#dde1e5;transform:scaleX(1.0335);">Pending</div>
<div class="t" style="left:222.0px;top:395.73px;font-size:14.5px;color:#dde1e5;transform:scaleX(1.0360);">Send Acknowledgements</div>
<div class="t" style="left:222.0px;top:488.33px;font-size:14.5px;color:#dde1e5;transform:scaleX(1.0595);">Acknowledgment</div>
<div style="position:absolute;left:222px;top:284px;width:224px;height:0;border-top:1px dashed #6f7884"></div>
<div style="position:absolute;left:222px;top:318px;width:224px;height:0;border-top:1px dashed #6f7884"></div>
<div style="position:absolute;left:222px;top:351px;width:224px;height:0;border-top:1px dashed #6f7884"></div>
<div style="position:absolute;left:222px;top:385px;width:224px;height:0;border-top:1px dashed #6f7884"></div>
<div class="t" style="left:222.0px;top:451.30px;font-size:15.0px;color:#fff;font-weight:bold;transform:scaleX(0.9801);">Settings</div>
<div style="position:absolute;left:31px;top:327px;width:147px;height:49px;border:5px solid #ed1c24"></div>
<div style="position:absolute;left:203px;top:237px;width:227px;height:39px;border:5px solid #ed1c24"></div>
<div style="position:absolute;left:1899px;top:127px;width:21px;height:902px;background:#f1f1f1"></div>
<div style="position:absolute;left:1900px;top:148px;width:19px;height:202px;background:#c6c6c6"></div>
<svg style="position:absolute;left:1903px;top:133px" width="13" height="9"><path d="M1.5 7.5L6.5 2L11.5 7.5" fill="none" stroke="#505050" stroke-width="1.8"/></svg>
<svg style="position:absolute;left:1903px;top:1014px" width="13" height="9"><path d="M1.5 1.5L6.5 7L11.5 1.5" fill="none" stroke="#505050" stroke-width="1.8"/></svg>
<div style="position:absolute;left:0px;top:1030px;width:1920px;height:9px;background:linear-gradient(to right,#1c2229,#1d2630 60%,#1f2a36)"></div>
<div style="position:absolute;left:374px;top:1030px;width:56px;height:9px;background:#4a4f54"></div>
<div style="position:absolute;left:430px;top:1030px;width:5px;height:9px;background:#37393c"></div>
<div style="position:absolute;left:1914px;top:1030px;width:1px;height:9px;background:#6a7580"></div>
</body></html>
